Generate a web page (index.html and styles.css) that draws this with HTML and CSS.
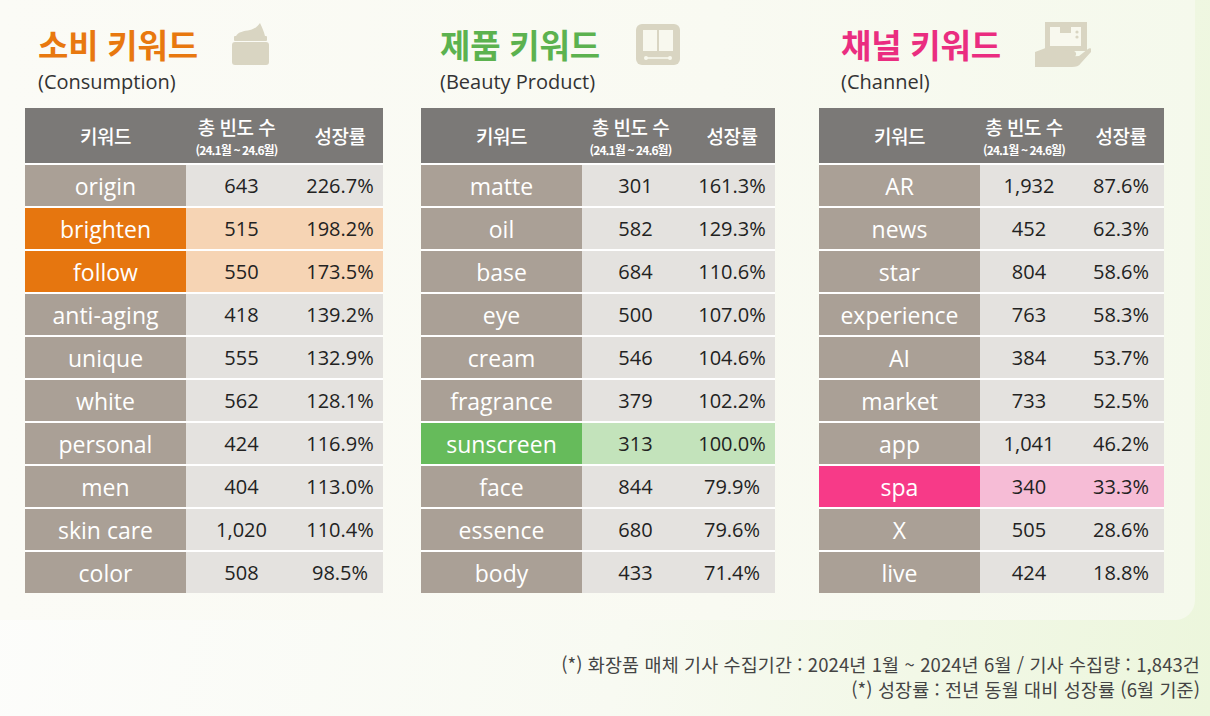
FILE: index.html
```html
<!DOCTYPE html>
<html lang="ko">
<head>
<meta charset="utf-8">
<title>키워드</title>
<link rel="stylesheet" href="styles.css">
</head>
<body>
<div class="page">
  <div class="panel">
    <section class="col c1">
      <div class="head">
        <h2 class="title orange">소비 키워드</h2>
        <svg class="icon" width="41" height="42" viewBox="0 0 41 42">
          <path d="M6 13 C8 9 14 8 20 7 C25 6 28 3 30 0 C32 4 34 9 35 13 Z" fill="#d9d5c2"/>
          <rect x="4" y="13" width="33" height="5" rx="1" fill="#d9d5c2"/>
          <rect x="2" y="19" width="37" height="23" rx="3" fill="#d9d5c2"/>
        </svg>
      </div>
      <div class="sub">(Consumption)</div>
      <div class="tbl">
        <div class="row hdr"><div>키워드</div><div class="freq"><span>총 빈도 수</span><small>(24.1월 ~ 24.6월)</small></div><div>성장률</div></div>
        <div class="row"><div class="kw">origin</div><div>643</div><div>226.7%</div></div>
        <div class="row or"><div class="kw">brighten</div><div>515</div><div>198.2%</div></div>
        <div class="row or"><div class="kw">follow</div><div>550</div><div>173.5%</div></div>
        <div class="row"><div class="kw">anti-aging</div><div>418</div><div>139.2%</div></div>
        <div class="row"><div class="kw">unique</div><div>555</div><div>132.9%</div></div>
        <div class="row"><div class="kw">white</div><div>562</div><div>128.1%</div></div>
        <div class="row"><div class="kw">personal</div><div>424</div><div>116.9%</div></div>
        <div class="row"><div class="kw">men</div><div>404</div><div>113.0%</div></div>
        <div class="row"><div class="kw">skin care</div><div>1,020</div><div>110.4%</div></div>
        <div class="row"><div class="kw">color</div><div>508</div><div>98.5%</div></div>
      </div>
    </section>
    <section class="col c2">
      <div class="head">
        <h2 class="title green">제품 키워드</h2>
        <svg class="icon" width="44" height="41" viewBox="0 0 44 41">
          <rect x="0" y="0" width="44" height="41" rx="6" fill="#d9d5c2"/>
          <rect x="7" y="6" width="14" height="21" fill="#f8f8ee"/>
          <rect x="23" y="6" width="14" height="21" fill="#f8f8ee"/>
          <line x1="10" y1="34" x2="34" y2="34" stroke="#f8f8ee" stroke-width="1.6"/>
          <circle cx="10" cy="34" r="2" fill="#f8f8ee"/>
          <circle cx="34" cy="34" r="2" fill="#f8f8ee"/>
        </svg>
      </div>
      <div class="sub">(Beauty Product)</div>
      <div class="tbl">
        <div class="row hdr"><div>키워드</div><div class="freq"><span>총 빈도 수</span><small>(24.1월 ~ 24.6월)</small></div><div>성장률</div></div>
        <div class="row"><div class="kw">matte</div><div>301</div><div>161.3%</div></div>
        <div class="row"><div class="kw">oil</div><div>582</div><div>129.3%</div></div>
        <div class="row"><div class="kw">base</div><div>684</div><div>110.6%</div></div>
        <div class="row"><div class="kw">eye</div><div>500</div><div>107.0%</div></div>
        <div class="row"><div class="kw">cream</div><div>546</div><div>104.6%</div></div>
        <div class="row"><div class="kw">fragrance</div><div>379</div><div>102.2%</div></div>
        <div class="row gr"><div class="kw">sunscreen</div><div>313</div><div>100.0%</div></div>
        <div class="row"><div class="kw">face</div><div>844</div><div>79.9%</div></div>
        <div class="row"><div class="kw">essence</div><div>680</div><div>79.6%</div></div>
        <div class="row"><div class="kw">body</div><div>433</div><div>71.4%</div></div>
      </div>
    </section>
    <section class="col c3">
      <div class="head">
        <h2 class="title pink">채널 키워드</h2>
        <svg class="icon" width="56" height="47" viewBox="0 0 56 47">
          <rect x="10" y="1" width="42" height="29" fill="#d9d5c2"/>
          <rect x="15" y="6" width="31" height="19" fill="#f8f8ee"/>
          <rect x="25" y="6" width="11" height="6" fill="#d9d5c2"/>
          <circle cx="42" cy="11" r="1.6" fill="#d9d5c2"/>
          <circle cx="42" cy="16" r="1.6" fill="#d9d5c2"/>
          <path d="M0 31 L8 28 C14 25 22 26 30 29 L39 30 C42 31 42 36 38 36 L27 36 L44 35 L53 28 C56 26 58 29 56 31 L46 42 C44 45 41 46 37 46 L0 46 Z" fill="#d9d5c2"/>
        </svg>
      </div>
      <div class="sub">(Channel)</div>
      <div class="tbl">
        <div class="row hdr"><div>키워드</div><div class="freq"><span>총 빈도 수</span><small>(24.1월 ~ 24.6월)</small></div><div>성장률</div></div>
        <div class="row"><div class="kw">AR</div><div>1,932</div><div>87.6%</div></div>
        <div class="row"><div class="kw">news</div><div>452</div><div>62.3%</div></div>
        <div class="row"><div class="kw">star</div><div>804</div><div>58.6%</div></div>
        <div class="row"><div class="kw">experience</div><div>763</div><div>58.3%</div></div>
        <div class="row"><div class="kw">AI</div><div>384</div><div>53.7%</div></div>
        <div class="row"><div class="kw">market</div><div>733</div><div>52.5%</div></div>
        <div class="row"><div class="kw">app</div><div>1,041</div><div>46.2%</div></div>
        <div class="row pk"><div class="kw">spa</div><div>340</div><div>33.3%</div></div>
        <div class="row"><div class="kw">X</div><div>505</div><div>28.6%</div></div>
        <div class="row"><div class="kw">live</div><div>424</div><div>18.8%</div></div>
      </div>
    </section>
  </div>
  <div class="foot">
    <p>(*) 화장품 매체 기사 수집기간 : 2024년 1월 ~ 2024년 6월 / 기사 수집량 : 1,843건</p>
    <p>(*) 성장률 : 전년 동월 대비 성장률 (6월 기준)</p>
  </div>
</div>
</body>
</html>
```
FILE: styles.css
```css
* { box-sizing: border-box; }
html, body { margin: 0; padding: 0; }
body {
  width: 1210px;
  height: 716px;
  overflow: hidden;
  background: linear-gradient(100deg, #fdfdfc 0%, #f8faf2 55%, #ecf6dc 100%);
  font-family: "Open Sans", "Noto Sans CJK KR", sans-serif;
}
.page { width: 1210px; height: 716px; }
.panel {
  width: 1195px;
  height: 620px;
  border-bottom-right-radius: 20px;
  background: linear-gradient(90deg, #fbfbf6 0%, #f9faf2 60%, #f5f9ec 100%);
  display: grid;
  grid-template-columns: 358px 354px 351px;
  column-gap: 38px;
  padding: 20px 0 0 25px;
}
.c3 { margin-left: 6px; }
.head {
  display: flex;
  align-items: center;
  gap: 32px;
  padding-left: 13px;
  height: 48px;
}
.c2 .head, .c2 .sub { padding-left: 19px; }
.c3 .head, .c3 .sub { padding-left: 22px; }
.c2 .head { gap: 36px; }
.c3 .head { gap: 34px; }
.title {
  margin: 0;
  font-family: "Noto Sans CJK KR", sans-serif;
  font-weight: 700;
  font-size: 33px;
  letter-spacing: -0.2px;
  line-height: 48px;
}
.orange { color: #e8780f; }
.green { color: #5cb24f; }
.pink { color: #ea2d80; }
.icon { display: block; flex: none; }
.sub {
  padding-left: 13px;
  font-family: "Open Sans", sans-serif;
  font-size: 20px;
  line-height: 27px;
  color: #333;
  margin-bottom: 13px;
}
.tbl {
  display: flex;
  flex-direction: column;
  gap: 2px;
  background: #fff;
}
.row {
  display: grid;
  grid-template-columns: 161px 1fr 86px;
  height: 41px;
  background: #e4e2df;
  color: #222;
  font-size: 20px;
}
.row > div {
  display: flex;
  align-items: center;
  justify-content: center;
}
.row .kw {
  background: #aaa096;
  color: #fff;
  font-size: 23px;
}
.row.hdr {
  height: 55px;
  background: #7b7977;
  color: #fff;
  font-family: "Noto Sans CJK KR", sans-serif;
  font-size: 19px;
  font-weight: 500;
  letter-spacing: -0.5px;
}
.row.hdr .freq {
  flex-direction: column;
  margin-left: -10px;
}
.row.hdr .freq span { display: block; line-height: 28px; }
.row.hdr small {
  display: block;
  font-size: 12px;
  font-weight: 700;
  letter-spacing: -0.9px;
  line-height: 17px;
}
.row.or { background: #f6d4b4; }
.row.or .kw { background: #e6760f; }
.row.gr { background: #c3e3bb; }
.row.gr .kw { background: #66bb5b; }
.row.pk { background: #f6bcd6; }
.row.pk .kw { background: #f73a88; }
.foot {
  padding: 32px 10px 0 0;
  text-align: right;
  font-family: "Noto Sans CJK KR", sans-serif;
  font-size: 18.5px;
  color: #444;
  letter-spacing: 0.1px;
}
.foot p { margin: 0; line-height: 25px; }
```
